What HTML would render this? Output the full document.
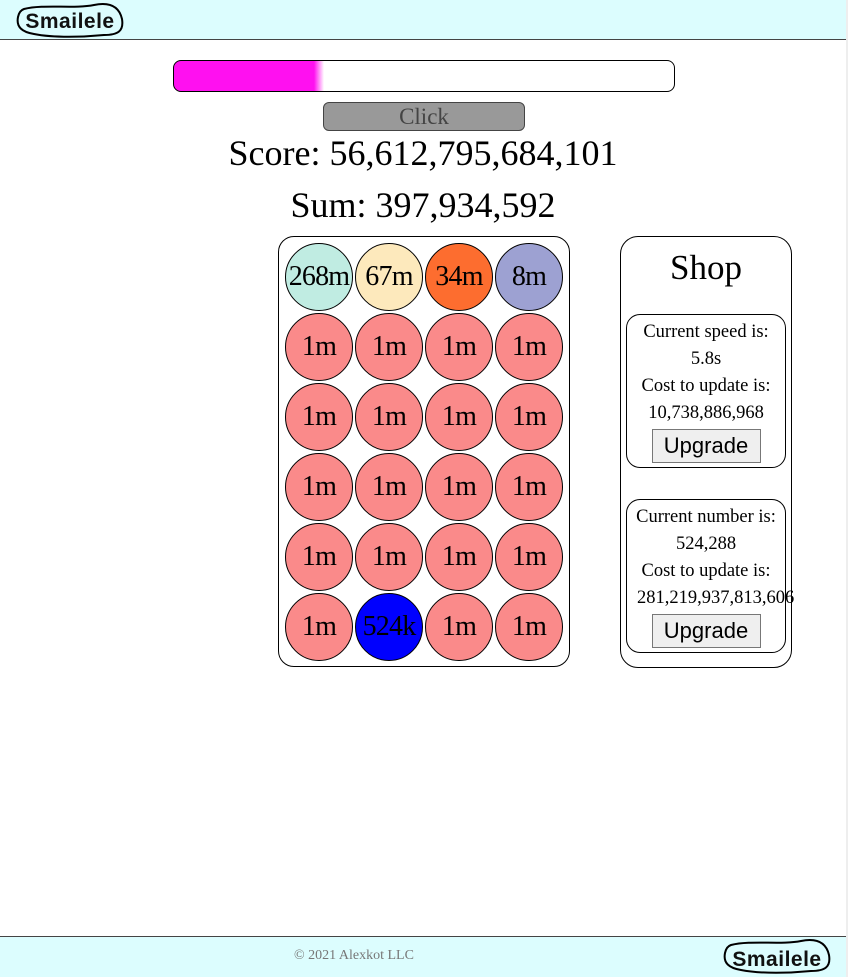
<!DOCTYPE html>
<html><head><meta charset="utf-8"><style>
*{margin:0;padding:0;box-sizing:border-box}
body{width:848px;height:977px;position:relative;background:#fff;font-family:"Liberation Serif",serif;overflow:hidden}
.a{position:absolute}
.hdr{left:0;top:0;width:846px;height:40px;background:#dcfdfe;border-bottom:1px solid #444}
.ftr{left:0;top:936px;width:846px;height:41px;background:#dcfdfe;border-top:1px solid #444}
.sb{left:846px;top:0;width:2px;height:977px;background:#eee}
.bar{left:173px;top:60px;width:502px;height:32px;border:1px solid #000;border-radius:8px;overflow:hidden;background:linear-gradient(90deg,#ff10f0 0,#ff10f0 140px,#fff 150px)}
.btn{left:323px;top:102px;width:202px;height:29px;background:#999;border:1px solid #444;border-radius:6px;color:#444;font-size:23px;text-align:center;line-height:27px}
.t{left:0;width:846px;text-align:center;font-size:36px;color:#000}
.grid{left:278px;top:236px;width:292px;height:431px;border:1px solid #000;border-radius:16px}
.c{width:68px;height:68px;border:1px solid #000;border-radius:50%;text-align:center;line-height:66px;font-size:28px;background:#fa8a8a;letter-spacing:-0.8px;white-space:nowrap;overflow:visible}
.shop{left:620px;top:236px;width:172px;height:432px;border:1px solid #000;border-radius:18px}
.box{left:626px;width:160px;height:154px;border:1px solid #000;border-radius:14px;text-align:center;font-size:18.5px;line-height:27px;padding-top:4px;white-space:nowrap}
.up{display:inline-block;width:109px;height:34px;background:#efefef;border:1px solid #777;font-family:"Liberation Sans",sans-serif;font-size:22px;line-height:32px;margin-top:2px}
.logo text{font-family:"Liberation Sans",sans-serif;font-weight:bold}
</style></head><body>
<div class="a hdr"></div>
<svg class="a logo" style="left:14px;top:1px" width="112" height="38" viewBox="0 0 112 38"><path d="M10 8 C30 3 60 8 80 4 C95 1 105 5 108 18 C110 30 104 34 90 34 C70 36 40 37 20 33 C8 31 2 26 4 16 C5 11 7 9 10 8 Z" fill="none" stroke="#000" stroke-width="2"/><text x="56" y="27" text-anchor="middle" font-size="21" fill="#111" letter-spacing="0.5">Smailele</text></svg>
<div class="a sb"></div>
<div class="a bar"></div>
<div class="a btn">Click</div>
<div class="a t" style="top:132px">Score: 56,612,795,684,101</div>
<div class="a t" style="top:184px">Sum: 397,934,592</div>
<div class="a grid"></div>
<div class="a c" style="left:285px;top:243px;background:#c0ece2">268m</div>
<div class="a c" style="left:355px;top:243px;background:#fde9bc">67m</div>
<div class="a c" style="left:425px;top:243px;background:#fd6d2f">34m</div>
<div class="a c" style="left:495px;top:243px;background:#9da1d2">8m</div>
<div class="a c" style="left:285px;top:313px">1m</div><div class="a c" style="left:355px;top:313px">1m</div><div class="a c" style="left:425px;top:313px">1m</div><div class="a c" style="left:495px;top:313px">1m</div>
<div class="a c" style="left:285px;top:383px">1m</div><div class="a c" style="left:355px;top:383px">1m</div><div class="a c" style="left:425px;top:383px">1m</div><div class="a c" style="left:495px;top:383px">1m</div>
<div class="a c" style="left:285px;top:453px">1m</div><div class="a c" style="left:355px;top:453px">1m</div><div class="a c" style="left:425px;top:453px">1m</div><div class="a c" style="left:495px;top:453px">1m</div>
<div class="a c" style="left:285px;top:523px">1m</div><div class="a c" style="left:355px;top:523px">1m</div><div class="a c" style="left:425px;top:523px">1m</div><div class="a c" style="left:495px;top:523px">1m</div>
<div class="a c" style="left:285px;top:593px">1m</div><div class="a c" style="left:355px;top:593px;background:#0000fe">524k</div><div class="a c" style="left:425px;top:593px">1m</div><div class="a c" style="left:495px;top:593px">1m</div>
<div class="a shop"></div>
<div class="a" style="left:620px;top:248px;width:172px;text-align:center;font-size:35px">Shop</div>
<div class="a box" style="top:314px">Current speed is:<br>5.8s<br>Cost to update is:<br>10,738,886,968<br><span class="up">Upgrade</span></div>
<div class="a box" style="top:499px">Current number is:<br>524,288<br>Cost to update is:<br><div style="text-align:left;padding-left:10px;height:27px">281,219,937,813,606</div><span class="up">Upgrade</span></div>
<div class="a ftr"></div>
<div class="a" style="left:294px;top:948px;font-size:14px;color:#777">© 2021 Alexkot LLC</div>
<svg class="a logo" style="left:721px;top:937px" width="112" height="38" viewBox="0 0 112 38"><path d="M10 8 C30 3 60 8 80 4 C95 1 105 5 108 18 C110 30 104 34 90 34 C70 36 40 37 20 33 C8 31 2 26 4 16 C5 11 7 9 10 8 Z" fill="none" stroke="#000" stroke-width="2"/><text x="56" y="29" text-anchor="middle" font-size="21" fill="#111" letter-spacing="0.5">Smailele</text></svg>
</body></html>
